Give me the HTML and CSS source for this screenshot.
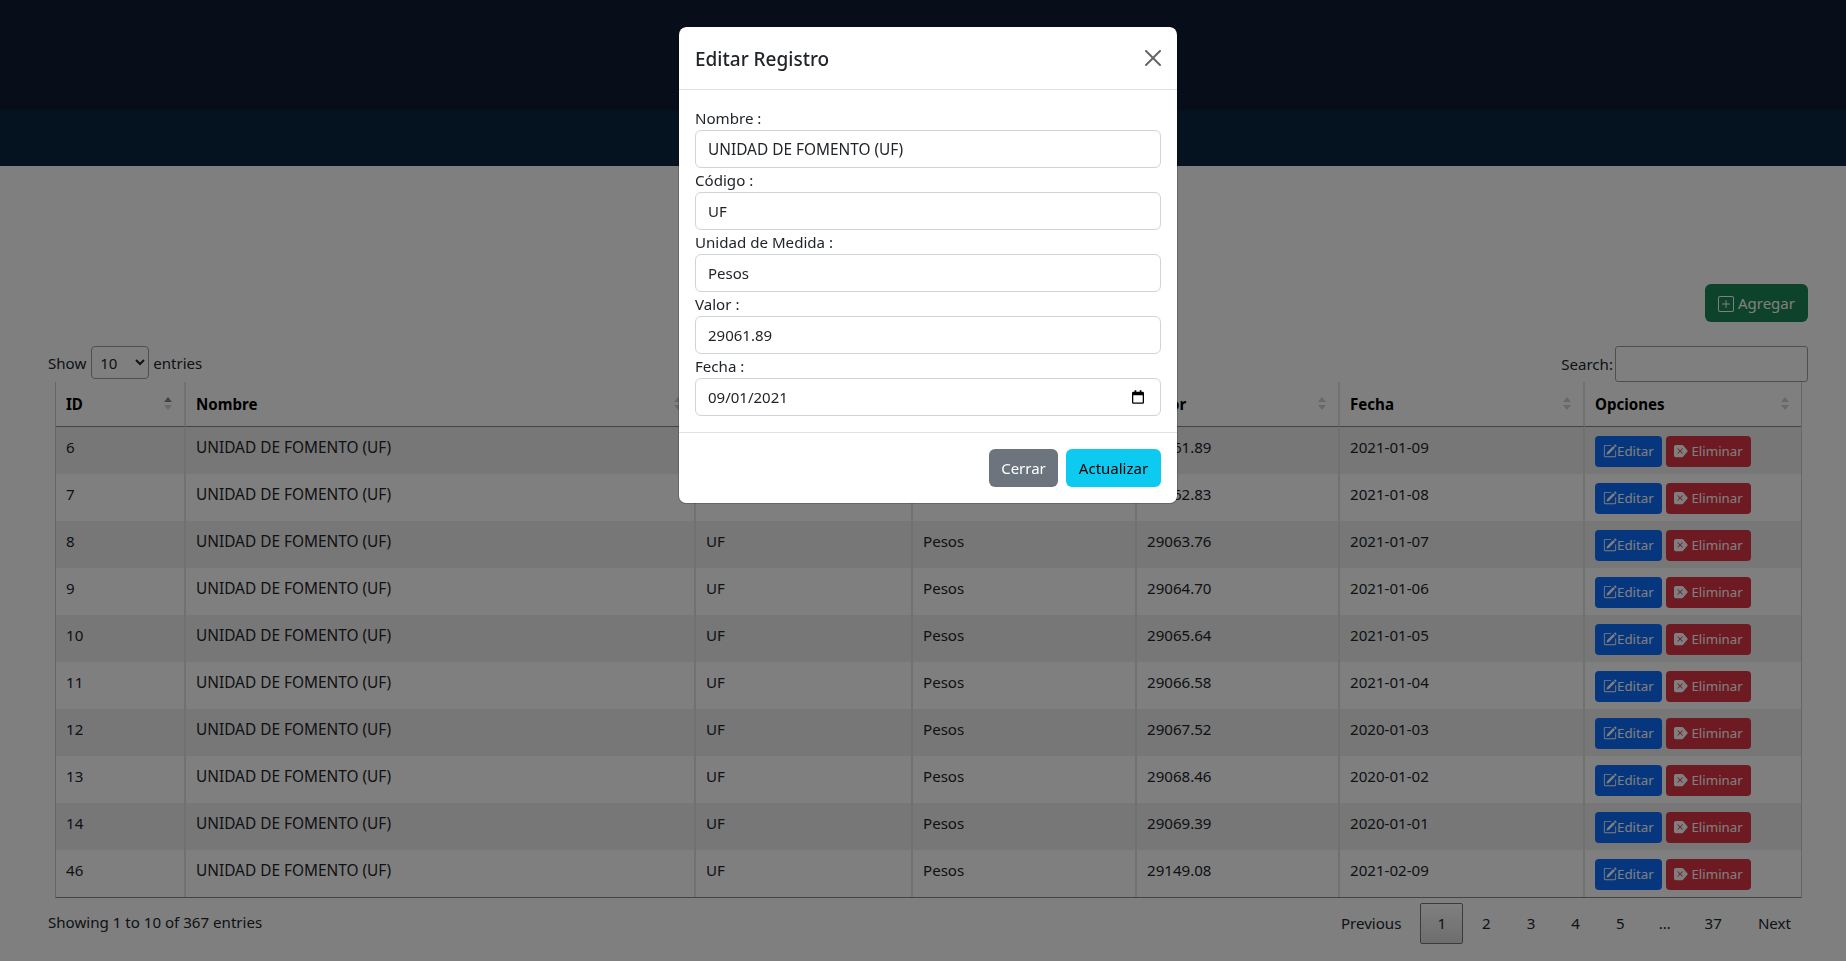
FILE: index.html
```html
<!DOCTYPE html>
<html lang="en">
<head>
    <meta charset="UTF-8">
    <title>Indicadores</title>
    <link rel="stylesheet" href="styles.css">
</head>
<body>
    <!-- Shared icons -->
    <svg class="icon-defs">
        <symbol id="i-plus" viewBox="0 0 16 16">
            <path d="M14 1a1 1 0 0 1 1 1v12a1 1 0 0 1-1 1H2a1 1 0 0 1-1-1V2a1 1 0 0 1 1-1h12zM2 0a2 2 0 0 0-2 2v12a2 2 0 0 0 2 2h12a2 2 0 0 0 2-2V2a2 2 0 0 0-2-2H2z"/>
            <path d="M8 4a.5.5 0 0 1 .5.5v3h3a.5.5 0 0 1 0 1h-3v3a.5.5 0 0 1-1 0v-3h-3a.5.5 0 0 1 0-1h3v-3A.5.5 0 0 1 8 4z"/>
        </symbol>
        <symbol id="i-edit" viewBox="0 0 16 16">
            <path d="M15.502 1.94a.5.5 0 0 1 0 .706L14.459 3.69l-2-2L13.502.646a.5.5 0 0 1 .707 0l1.293 1.293zm-1.75 2.456-2-2L4.939 9.21a.5.5 0 0 0-.121.196l-.805 2.414a.25.25 0 0 0 .316.316l2.414-.805a.5.5 0 0 0 .196-.12l6.813-6.814z"/>
            <path fill-rule="evenodd" d="M1 13.5A1.5 1.5 0 0 0 2.5 15h11a1.5 1.5 0 0 0 1.5-1.5v-6a.5.5 0 0 0-1 0v6a.5.5 0 0 1-.5.5h-11a.5.5 0 0 1-.5-.5v-11a.5.5 0 0 1 .5-.5H9a.5.5 0 0 0 0-1H2.5A1.5 1.5 0 0 0 1 2.5v11z"/>
        </symbol>
        <symbol id="i-del" viewBox="0 0 16 16">
            <path d="M0 3a2 2 0 0 1 2-2h7.08a2 2 0 0 1 1.519.698l4.843 5.651a1 1 0 0 1 0 1.302L10.6 14.3a2 2 0 0 1-1.52.7H2a2 2 0 0 1-2-2V3zm9.854 2.854a.5.5 0 0 0-.708-.708L7 7.293 4.854 5.146a.5.5 0 1 0-.708.708L6.293 8l-2.147 2.146a.5.5 0 0 0 .708.708L7 8.707l2.146 2.147a.5.5 0 0 0 .708-.708L7.707 8l2.147-2.146z"/>
        </symbol>
    </svg>

    <!-- Header -->
    <div class="top-bar"></div>
    <div class="nav-bar"></div>

    <div class="content">
        <div class="actions">
            <button class="btn btn-green"><svg class="icon"><use href="#i-plus"/></svg> Agregar</button>
        </div>

        <div class="dt-top">
            <label class="dt-length">Show
                <select class="dt-select"><option>10</option></select>
                entries</label>
            <label class="dt-search">Search:<input type="text" class="dt-input"></label>
        </div>

        <table class="data-table">
            <colgroup>
                <col class="c-id"><col class="c-name"><col class="c-code"><col class="c-unit"><col class="c-val"><col class="c-date"><col class="c-opt">
            </colgroup>
            <thead>
                <tr>
                    <th class="sort-asc">ID</th>
                    <th>Nombre</th>
                    <th>Código</th>
                    <th>Unidad de Medida</th>
                    <th>Valor</th>
                    <th>Fecha</th>
                    <th>Opciones</th>
                </tr>
            </thead>
            <tbody>
                <tr><td>6</td><td>UNIDAD DE FOMENTO (UF)</td><td>UF</td><td>Pesos</td><td>29061.89</td><td>2021-01-09</td><td><a class="btn-sm btn-blue"><svg class="icon-sm"><use href="#i-edit"/></svg>Editar</a><a class="btn-sm btn-red"><svg class="icon-sm"><use href="#i-del"/></svg> Eliminar</a></td></tr>
                <tr><td>7</td><td>UNIDAD DE FOMENTO (UF)</td><td>UF</td><td>Pesos</td><td>29062.83</td><td>2021-01-08</td><td><a class="btn-sm btn-blue"><svg class="icon-sm"><use href="#i-edit"/></svg>Editar</a><a class="btn-sm btn-red"><svg class="icon-sm"><use href="#i-del"/></svg> Eliminar</a></td></tr>
                <tr><td>8</td><td>UNIDAD DE FOMENTO (UF)</td><td>UF</td><td>Pesos</td><td>29063.76</td><td>2021-01-07</td><td><a class="btn-sm btn-blue"><svg class="icon-sm"><use href="#i-edit"/></svg>Editar</a><a class="btn-sm btn-red"><svg class="icon-sm"><use href="#i-del"/></svg> Eliminar</a></td></tr>
                <tr><td>9</td><td>UNIDAD DE FOMENTO (UF)</td><td>UF</td><td>Pesos</td><td>29064.70</td><td>2021-01-06</td><td><a class="btn-sm btn-blue"><svg class="icon-sm"><use href="#i-edit"/></svg>Editar</a><a class="btn-sm btn-red"><svg class="icon-sm"><use href="#i-del"/></svg> Eliminar</a></td></tr>
                <tr><td>10</td><td>UNIDAD DE FOMENTO (UF)</td><td>UF</td><td>Pesos</td><td>29065.64</td><td>2021-01-05</td><td><a class="btn-sm btn-blue"><svg class="icon-sm"><use href="#i-edit"/></svg>Editar</a><a class="btn-sm btn-red"><svg class="icon-sm"><use href="#i-del"/></svg> Eliminar</a></td></tr>
                <tr><td>11</td><td>UNIDAD DE FOMENTO (UF)</td><td>UF</td><td>Pesos</td><td>29066.58</td><td>2021-01-04</td><td><a class="btn-sm btn-blue"><svg class="icon-sm"><use href="#i-edit"/></svg>Editar</a><a class="btn-sm btn-red"><svg class="icon-sm"><use href="#i-del"/></svg> Eliminar</a></td></tr>
                <tr><td>12</td><td>UNIDAD DE FOMENTO (UF)</td><td>UF</td><td>Pesos</td><td>29067.52</td><td>2020-01-03</td><td><a class="btn-sm btn-blue"><svg class="icon-sm"><use href="#i-edit"/></svg>Editar</a><a class="btn-sm btn-red"><svg class="icon-sm"><use href="#i-del"/></svg> Eliminar</a></td></tr>
                <tr><td>13</td><td>UNIDAD DE FOMENTO (UF)</td><td>UF</td><td>Pesos</td><td>29068.46</td><td>2020-01-02</td><td><a class="btn-sm btn-blue"><svg class="icon-sm"><use href="#i-edit"/></svg>Editar</a><a class="btn-sm btn-red"><svg class="icon-sm"><use href="#i-del"/></svg> Eliminar</a></td></tr>
                <tr><td>14</td><td>UNIDAD DE FOMENTO (UF)</td><td>UF</td><td>Pesos</td><td>29069.39</td><td>2020-01-01</td><td><a class="btn-sm btn-blue"><svg class="icon-sm"><use href="#i-edit"/></svg>Editar</a><a class="btn-sm btn-red"><svg class="icon-sm"><use href="#i-del"/></svg> Eliminar</a></td></tr>
                <tr><td>46</td><td>UNIDAD DE FOMENTO (UF)</td><td>UF</td><td>Pesos</td><td>29149.08</td><td>2021-02-09</td><td><a class="btn-sm btn-blue"><svg class="icon-sm"><use href="#i-edit"/></svg>Editar</a><a class="btn-sm btn-red"><svg class="icon-sm"><use href="#i-del"/></svg> Eliminar</a></td></tr>
            </tbody>
        </table>

        <div class="dt-bottom">
            <div class="dt-info">Showing 1 to 10 of 367 entries</div>
            <div class="pager">
                <a class="page">Previous</a>
                <a class="page current">1</a>
                <a class="page">2</a>
                <a class="page">3</a>
                <a class="page">4</a>
                <a class="page">5</a>
                <span class="page gap">…</span>
                <a class="page">37</a>
                <a class="page">Next</a>
            </div>
        </div>
    </div>

    <!-- Edit modal -->
    <div class="backdrop"></div>
    <div class="modal">
        <div class="modal-box">
            <div class="modal-head">
                <h5 class="modal-title">Editar Registro</h5>
                <button class="btn-close">
                    <svg viewBox="0 0 16 16" class="close-icon"><path d="M.293.293a1 1 0 011.414 0L8 6.586 14.293.293a1 1 0 111.414 1.414L9.414 8l6.293 6.293a1 1 0 01-1.414 1.414L8 9.414l-6.293 6.293a1 1 0 01-1.414-1.414L6.586 8 .293 1.707a1 1 0 010-1.414z"/></svg>
                </button>
            </div>
            <form class="modal-body">
                <label class="form-label">Nombre :</label>
                <input type="text" class="form-control upper" value="UNIDAD DE FOMENTO (UF)">
                <label class="form-label">Código :</label>
                <input type="text" class="form-control" value="UF">
                <label class="form-label">Unidad de Medida :</label>
                <input type="text" class="form-control" value="Pesos">
                <label class="form-label">Valor :</label>
                <input type="text" class="form-control" value="29061.89">
                <label class="form-label">Fecha :</label>
                <div class="date-wrap">
                    <input type="text" class="form-control" value="09/01/2021">
                    <svg class="date-icon" viewBox="0 0 14 16"><path d="M3 0h2v2h4V0h2v2h1.500A1.500 1.500 0 0 1 14 3.500v11a1.500 1.500 0 0 1-1.500 1.500h-11A1.500 1.500 0 0 1 0 14.500v-11A1.500 1.500 0 0 1 1.500 2H3V0zM1.500 6v8.500h11V6h-11z"/></svg>
                </div>
            </form>
            <div class="modal-foot">
                <button class="btn btn-gray">Cerrar</button>
                <button class="btn btn-cyan">Actualizar</button>
            </div>
        </div>
    </div>
</body>
</html>
```

FILE: styles.css
```css
body {
    margin: 0;
    font-family: "Noto Sans", "Open Sans", sans-serif;
    font-size: 15.1px;
    line-height: 24px;
    color: #212529;
    background-color: #fff;
}

.icon-defs {
    position: absolute;
    width: 0;
    height: 0;
}

/* Header */
.top-bar {
    height: 110px;
    background-color: #0e1a32;
}

.nav-bar {
    height: 56px;
    background-color: #0a2540;
}

.content {
    padding: 118px 38px 0 48px;
}

/* Buttons */
.actions {
    display: flex;
    justify-content: flex-end;
}

.btn {
    height: 38px;
    padding: 6px 12px;
    border: none;
    border-radius: 6px;
    font-family: inherit;
    font-size: 15px;
    line-height: 24px;
}

.btn-green {
    background-color: #198754;
    color: #fff;
    width: 103px;
    padding: 0;
}

.btn-gray {
    background-color: #6c757d;
    color: #fff;
    width: 69px;
    padding: 0;
}

.btn-cyan {
    background-color: #0dcaf0;
    color: #000;
    width: 95px;
    padding: 0;
}

.icon {
    width: 16px;
    height: 16px;
    fill: currentColor;
    vertical-align: -3px;
}

.icon-sm {
    width: 14px;
    height: 14px;
    fill: currentColor;
    vertical-align: -2px;
}

.btn-sm {
    display: inline-block;
    height: 31px;
    box-sizing: border-box;
    margin-top: 1px;
    padding: 4px 8px;
    border-radius: 4px;
    font-size: 13.3px;
    line-height: 23px;
    white-space: nowrap;
    color: #fff;
}

.btn-blue {
    background-color: #0d6efd;
    width: 67px;
    margin-right: 4px;
}

.btn-red {
    background-color: #dc3545;
    width: 85px;
}

/* Table controls */
.dt-top {
    display: flex;
    justify-content: space-between;
    margin-top: 24px;
    height: 36px;
}

.dt-length {
    height: 33px;
    line-height: 33px;
}

.dt-select {
    width: 58px;
    height: 33px;
    padding: 0 4px;
    margin: 0 0 0 1px;
    border: 1px solid #9f9f9f;
    border-radius: 4px;
    background-color: #fff;
    font-family: inherit;
    font-size: 15px;
    color: #212529;
}

.dt-search {
    display: flex;
    align-items: center;
    gap: 2px;
}

.dt-input {
    width: 193px;
    height: 36px;
    box-sizing: border-box;
    border: 1px solid #9f9f9f;
    border-radius: 3px;
}

/* Table */
.data-table {
    width: 1747px;
    margin-left: 7px;
    table-layout: fixed;
    border-collapse: separate;
    border-spacing: 0;
    border-left: 1px solid #ccc;
    border-right: 1px solid #ccc;
    border-bottom: 1px solid #888;
}

.c-id { width: 130px; }
.c-name { width: 510px; }
.c-code { width: 217px; }
.c-unit { width: 224px; }
.c-val { width: 203px; }
.c-date { width: 245px; }
.c-opt { width: 216px; }

th {
    position: relative;
    height: 45px;
    box-sizing: border-box;
    padding: 0 10px;
    text-align: left;
    font-weight: 700;
    color: #000;
    border-right: 2px solid #dee2e6;
    border-bottom: 1px solid #888;
}

th::before,
th::after {
    content: "";
    position: absolute;
    right: 12px;
    border-left: 4px solid transparent;
    border-right: 4px solid transparent;
}

th::before {
    top: 15px;
    border-bottom: 5px solid #d0d0d0;
}

th::after {
    top: 23px;
    border-top: 5px solid #d0d0d0;
}

th.sort-asc::before {
    border-bottom-color: #888;
}

td {
    height: 47px;
    box-sizing: border-box;
    padding: 8px 10px 0;
    vertical-align: top;
    border-right: 2px solid #dee2e6;
}

td:nth-child(2) {
    padding-top: 9px;
    font-size: 15.4px;
}

th:last-child,
td:last-child {
    border-right: none;
}

tbody tr:nth-child(odd) {
    background-color: #eee;
}

/* Footer of the table */
.dt-bottom {
    display: flex;
    justify-content: space-between;
}

.dt-info {
    padding-top: 12px;
}

.pager {
    display: flex;
    margin-top: 5px;
}

.page {
    display: block;
    height: 41px;
    box-sizing: border-box;
    padding: 7px 16px;
    margin-left: 2px;
    border: 1px solid transparent;
    border-radius: 2px;
}

.page.gap {
    padding: 7px 14px;
}

.page.current {
    border-color: #777;
    background: linear-gradient(to bottom, #fff, #dcdcdc);
}

/* Modal */
.backdrop {
    position: fixed;
    inset: 0;
    background-color: rgba(0, 0, 0, 0.5);
}

.modal {
    position: fixed;
    inset: 0;
    display: flex;
    justify-content: center;
    align-items: flex-start;
    padding: 27px 0 0 10px;
}

.modal-box {
    width: 500px;
    box-sizing: border-box;
    background-color: #fff;
    background-clip: padding-box;
    border: 1px solid rgba(0, 0, 0, 0.2);
    border-top: none;
    border-radius: 8px;
}

.modal-head {
    display: flex;
    align-items: center;
    justify-content: space-between;
    height: 63px;
    box-sizing: border-box;
    padding: 1px 16px 0;
    border-bottom: 1px solid #dee2e6;
}

.modal-title {
    margin: 0;
    font-size: 19px;
    font-weight: 500;
    line-height: 30px;
}

.btn-close {
    padding: 0;
    margin-bottom: 2px;
    border: none;
    background: none;
    width: 16px;
    height: 16px;
}

.close-icon {
    display: block;
    width: 16px;
    height: 16px;
    fill: #000;
    opacity: 0.6;
}

.modal-body {
    padding: 16px;
}

.form-label {
    display: block;
    height: 24px;
}

.form-control {
    display: block;
    width: 100%;
    height: 38px;
    box-sizing: border-box;
    padding: 6px 12px;
    border: 1px solid #ced4da;
    border-radius: 6px;
    font-family: inherit;
    font-size: 15px;
    color: #212529;
}

.form-control.upper {
    font-size: 15.4px;
}

.date-wrap {
    position: relative;
}

.date-icon {
    position: absolute;
    top: 12px;
    right: 17px;
    width: 12px;
    height: 14px;
}

.modal-foot {
    display: flex;
    justify-content: flex-end;
    gap: 8px;
    padding: 16px;
    border-top: 1px solid #dee2e6;
}
```
